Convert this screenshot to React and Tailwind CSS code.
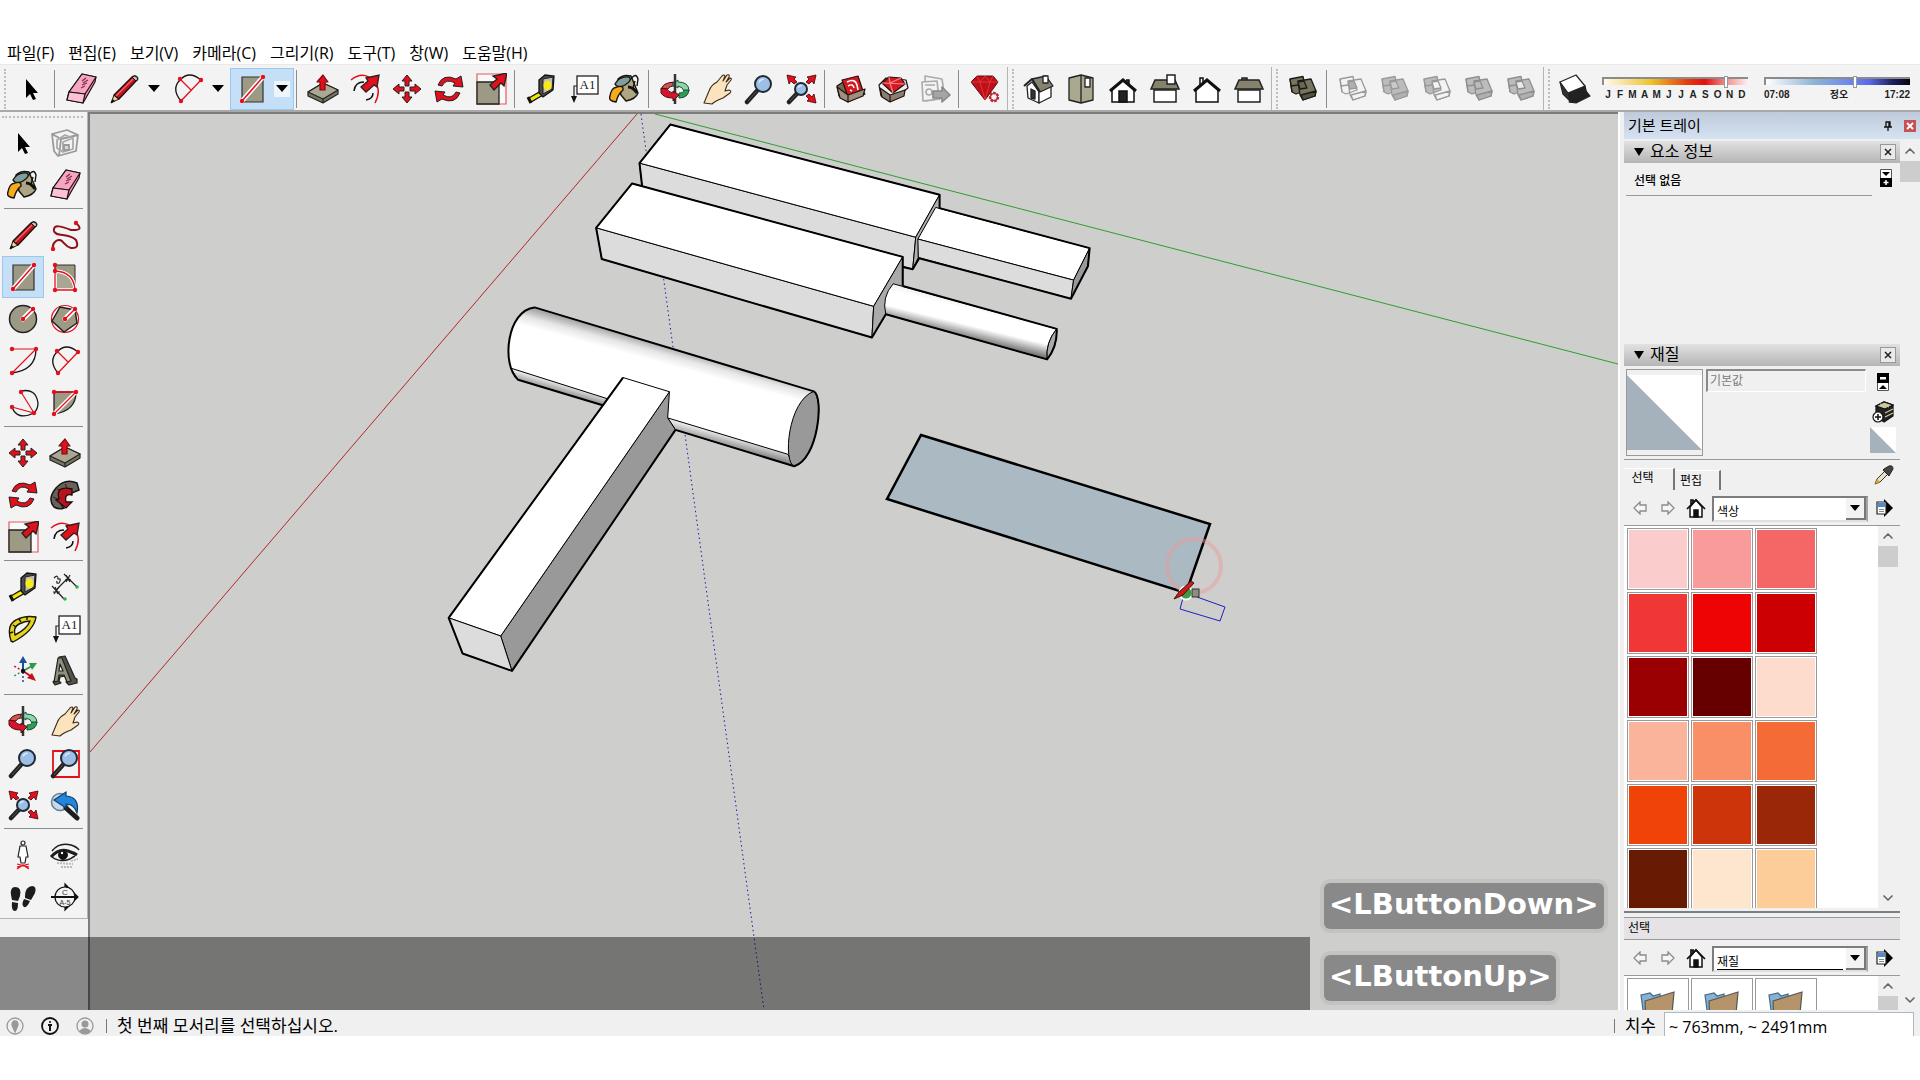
import { useState } from "react";
import clsx from "clsx";
import { ChevronDown, ChevronUp } from "lucide-react";

const menus = ["파일(F)", "편집(E)", "보기(V)", "카메라(C)", "그리기(R)", "도구(T)", "창(W)", "도움말(H)"];

const months = ["J", "F", "M", "A", "M", "J", "J", "A", "S", "O", "N", "D"];

const swatches = [
  "bg-[#fbcccc]", "bg-[#f99b9b]", "bg-[#f56766]",
  "bg-[#f13636]", "bg-[#ee0404]", "bg-[#cc0002]",
  "bg-[#9a0002]", "bg-[#660000]", "bg-[#fddccd]",
  "bg-[#fab49b]", "bg-[#f88f67]", "bg-[#f56b36]",
  "bg-[#f04307]", "bg-[#cd340a]", "bg-[#9a2708]",
  "bg-[#681b03]", "bg-[#fee6ce]", "bg-[#fccd99]",
];

const RED = "#e3101c";
const TAN = "#9c9a84";

function Dots({ points }) {
  return points.map(([x, y]) => (
    <circle key={`${x}-${y}`} cx={x} cy={y} r="2.2" fill={RED} />
  ));
}

function Lens({ x = 19, y = 11, r = 8 }) {
  return (
    <>
      <path d={`M${x - r * 0.8} ${y + r * 0.9}L4 29`} stroke="#222" strokeWidth="4.5" strokeLinecap="round" />
      <path d={`M${x - r * 0.8} ${y + r * 0.9}L5 28`} stroke="#555" strokeWidth="1" />
      <circle cx={x} cy={y} r={r} fill="#9dbfe6" stroke="#1f2a35" strokeWidth="2" />
      <path d={`M${x - r * 0.5} ${y - r * 0.2}a${r * 0.6} ${r * 0.6} 0 0 1 ${r * 0.6} -${r * 0.4}`} stroke="#d8e9fa" strokeWidth="1.5" />
    </>
  );
}

function Solids({ back, front, middle, stroke, side }) {
  return (
    <g stroke={stroke} strokeWidth="1.3" strokeLinejoin="round">
      <path d="M3 6L16 3.500L17 8L20 17L9 21L5 19Z" fill={back} />
      <path d="M3 6L4 13L5 19M4 13L18 11" fill="none" />
      <path d="M11 8L24 6L29 18L28 23L16 27L13 22Z" fill={front} />
      <path d="M14 22L29 18L28 23L16 27Z" fill={side} />
      <path d="M11 9L17 8L20 15L13 16Z" fill={middle} />
    </g>
  );
}

const icons = {
  select: <path d="M11 6V25L15 21L18 27L21 26L18 20H23Z" fill="#000" />,
  eraser: (
    <g stroke="#1a1214" strokeWidth="1.2" strokeLinejoin="round">
      <path d="M17 1L31 4L30 9L18 30L2 27L4 19Z" fill="#f48db0" />
      <path d="M17 1L31 4L20 21L4 19Z" fill="#f8a5bf" />
      <path d="M4 19L20 21L18 30L2 27Z" fill="#fcc2d4" />
      <path d="M21 5L17 8M23 7L18 10M22 10L17 12M20 13L16 15" stroke="#7a2c48" />
    </g>
  ),
  pencil: (
    <g strokeLinejoin="round">
      <path d="M3 30L6 22L11 26Z" fill="#e8cf9b" stroke="#1a1010" strokeWidth="1" />
      <path d="M6 22L24 4Q27 2 29 4T28 8L11 26Z" fill="#c3141c" stroke="#1a1010" strokeWidth="1.3" />
      <path d="M8 23L25 6" stroke="#f0676b" strokeWidth="1.3" />
      <path d="M24 4Q27 2 29 4T28 8Z" fill="#bdbdbd" stroke="#1a1010" />
      <path d="M3 30L4.500 26L7 28Z" fill="#111" />
    </g>
  ),
  arc2: (
    <g fill="none">
      <path d="M9 28Q-1 16 8 7Q17 -3 29 7" stroke="#151515" strokeWidth="1.3" />
      <path d="M9 28L29 7M8 6L19 17" stroke={RED} strokeWidth="1.3" />
      <Dots points={[[8, 6], [29, 7], [9, 28]]} />
    </g>
  ),
  rect: (
    <>
      <path d="M6 4H27V29H6Z" fill={TAN} stroke="#333" strokeWidth="1.2" />
      <path d="M6 28L27 4" stroke="#fff" strokeWidth="4.500" strokeLinecap="round" />
      <path d="M6 28L27 4" stroke={RED} strokeWidth="1.5" />
      <Dots points={[[6, 28], [27, 4]]} />
    </>
  ),
  rotRect: (
    <>
      <path d="M6 4H26V29H6Z" fill={TAN} stroke="#333" strokeWidth="1" />
      <path d="M6 10Q25 11 26 29H6Z" fill="#a9a793" stroke="#fff" strokeWidth="3.500" />
      <path d="M6 4V29H26Q25 11 6 10" fill="none" stroke={RED} strokeWidth="1.3" />
      <Dots points={[[6, 4], [6, 10], [6, 29], [26, 29]]} />
    </>
  ),
  circle: (
    <>
      <circle cx="16" cy="16" r="13.500" fill={TAN} stroke="#222" strokeWidth="1.5" />
      <path d="M16 16L26 6" stroke="#fff" strokeWidth="5" strokeLinecap="round" />
      <path d="M16 16L26 6" stroke={RED} strokeWidth="1.5" />
      <Dots points={[[16, 16], [26, 6]]} />
    </>
  ),
  polygon: (
    <>
      <circle cx="16" cy="16" r="13.500" fill="#fff" stroke={RED} strokeWidth="1.2" />
      <path d="M11 4L26 7L28 20L15 29L3 18Z" fill={TAN} stroke="#222" strokeWidth="1.5" />
      <path d="M16 16L26 6" stroke="#fff" strokeWidth="5" strokeLinecap="round" />
      <path d="M16 16L26 6" stroke={RED} strokeWidth="1.5" />
      <Dots points={[[16, 16], [26, 6]]} />
    </>
  ),
  arc: (
    <g fill="none">
      <path d="M29 4Q29 25 5 28" stroke="#151515" strokeWidth="1.3" />
      <path d="M5 4H29L5 28" stroke={RED} strokeWidth="1.2" />
      <Dots points={[[5, 4], [29, 4], [5, 28]]} />
    </g>
  ),
  arc3: (
    <g fill="none">
      <path d="M14 4Q29 1 31 16Q31 22 27 26Q10 34 5 20" stroke="#151515" strokeWidth="1.3" />
      <path d="M14 5L27 26L5 20" stroke={RED} strokeWidth="1.2" />
      <Dots points={[[14, 5], [27, 26], [5, 20]]} />
    </g>
  ),
  pie: (
    <>
      <path d="M5 5H27Q27 24 5 27Z" fill={TAN} stroke="#222" strokeWidth="1.3" />
      <path d="M5 27L27 5" stroke="#fff" strokeWidth="4" />
      <path d="M27 5H5M5 27L27 5" stroke={RED} strokeWidth="1.3" />
      <Dots points={[[5, 5], [27, 5], [5, 27]]} />
    </>
  ),
  freehand: (
    <g fill="none">
      <path d="M27 4Q36 12 22 11C12 7 4 5 5 12C6 18 20 14 27 21Q31 30 22 29C14 27 14 18 7 22Q3 25 4 30" stroke="#8f1018" strokeWidth="2" />
      <Dots points={[[27, 4], [4, 30]]} />
    </g>
  ),
  pushPull: (
    <g stroke="#222" strokeWidth="1.2" strokeLinejoin="round">
      <path d="M1 19L16 10L31 17V21L16 30L1 23Z" fill="#77755f" />
      <path d="M1 19L16 10L31 17L16 26Z" fill="#aaa892" />
      <path d="M16 26V30" />
      <path d="M16 2L21 9H18V17H13V9H10Z" fill={RED} stroke="#7a0a10" />
    </g>
  ),
  offset: (
    <g fill="none">
      <path d="M2 7Q14 -3 25 8Q33 17 26 30" stroke={RED} strokeWidth="1.5" />
      <path d="M5 18Q6 9 15 9M24 20Q24 26 17 27" stroke="#111" strokeWidth="1.5" />
      <path d="M12 14L19 8L17 5L30 2L28 14L25 12L17 19Z" fill={RED} stroke="#222" strokeWidth="1.3" />
    </g>
  ),
  move: (
    <g fill={RED} stroke="#222" strokeWidth="1" strokeLinejoin="round">
      <path d="M16 2L21 8H18V13H14V8H11Z" />
      <path d="M16 30L21 24H18V19H14V24H11Z" />
      <path d="M2 16L8 11V14H13V18H8V21Z" />
      <path d="M30 16L24 11V14H19V18H24V21Z" />
    </g>
  ),
  rotate: (
    <g fill={RED} stroke="#222" strokeWidth="1" strokeLinejoin="round">
      <path d="M5 12Q10 0 23 6L28 3L30 14L20 13L22 10Q13 5 9 13Z" />
      <path d="M27 20Q22 32 9 26L4 29L2 18L12 19L10 22Q19 27 23 19Z" />
    </g>
  ),
  scale: (
    <>
      <path d="M2 1H31V31H2Z" fill="#fff" fillOpacity=".5" stroke="#e35a62" strokeWidth="1.2" />
      <path d="M2 9H24V31H2Z" fill={TAN} stroke="#222" strokeWidth="1.3" />
      <path d="M15 12L22 6L18 3L32 0L29 13L26 10L19 17Z" fill={RED} stroke="#222" strokeWidth="1.3" />
    </>
  ),
  follow: (
    <>
      <path d="M5 28Q-2 20 7 9Q16 -1 28 4L30 11L23 14Q14 9 11 21Q12 27 15 29Q10 31 5 28Z" fill="#66645a" stroke="#171717" strokeWidth="1.5" />
      <path d="M4 18L11 21M8 10L15 12M16 5L19 11" stroke="#222" />
      <path d="M23 10Q6 6 10 20L7 21L17 29L23 23H17Q15 14 23 16Z" fill="#b3151e" stroke="#2b0507" strokeWidth="1.3" />
    </>
  ),
  tape: (
    <>
      <path d="M4 25L16 18L18 22L6 29Z" fill="#f2e30b" stroke="#111" strokeWidth="1.3" />
      <path d="M3 24L6 30" stroke="#111" strokeWidth="3" />
      <path d="M14 7L20 2L29 3L28 17L18 24L14 20Z" fill="#4b4b4b" stroke="#111" strokeWidth="1.3" />
      <path d="M18 6L28 4L27 16L18 21Z" fill="#bdbdbd" stroke="#222" />
      <ellipse cx="22.500" cy="12.500" rx="4" ry="5" fill="#f7ec1b" />
    </>
  ),
  text: (
    <>
      <path d="M7 23V13H11" fill="none" stroke="#222" strokeWidth="1.2" />
      <path d="M4 23H10L7 30Z" fill="#111" />
      <rect x="10" y="3" width="21" height="18" fill="#fff" stroke="#222" strokeWidth="1.3" />
      <text x="20.500" y="16" textAnchor="middle" fontFamily="Liberation Serif" fontSize="13" fill="#222">A1</text>
    </>
  ),
  paint: (
    <g stroke="#16150f" strokeWidth="1.4" strokeLinejoin="round">
      <path d="M9 6Q14 1 22 3L29 20Q27 26 17 28L12 22Z" fill="#b0a583" />
      <path d="M6 11Q10 3 20 4Q24 7 16 12Q9 16 6 11Z" fill="#7f9f9f" />
      <path d="M22 6Q27 -1 29 6L28 13M26 8L24 15" fill="none" />
      <path d="M5 15Q15 11 14 17Q9 21 7 29Q-1 28 1 23Q2 17 5 15Z" fill="#f4ab1c" />
      <path d="M19 14Q24 14 28 20" fill="none" stroke="#111" strokeWidth="3" />
    </g>
  ),
  orbit: (
    <g strokeWidth="1" strokeLinejoin="round">
      <path d="M15 9Q2 10 3 17L9 16Q10 13 16 13Z" fill="#c55" stroke="#4c0a10" />
      <path d="M19 7L13 11L19 15V13Q24 14 25 18H30Q30 9 19 9Z" fill="#8ed5ae" stroke="#14512e" />
      <path d="M30 17Q29 25 20 25V20Q25 20 25 17Z" fill="#2f9d58" stroke="#14512e" />
      <path d="M16 1V31" stroke="#333" strokeWidth="2.500" />
      <path d="M2 15V20Q5 25 14 25V28L20 22L14 18V20Q9 19 8 16Z" fill="#d5152b" stroke="#4c0a10" />
    </g>
  ),
  pan: (
    <path
      d="M3 30L8 18Q10 12 16 9L21 3Q23 1 24 3L22 8L26 2Q29 1 28 4L25 9L29 5Q31 5 30 7L26 12L24 18L28 17Q31 18 29 20L22 25Q14 28 11 31Z"
      fill="#fbe3bd"
      stroke="#3c2b1c"
      strokeWidth="1.1"
      strokeLinejoin="round"
    />
  ),
  zoom: <Lens x={20} y={11} />,
  zoomWindow: (
    <>
      <path d="M4 4H30V30H4Z" fill="none" stroke={RED} strokeWidth="1.8" />
      <Lens x={20} y={11} />
    </>
  ),
  extents: (
    <>
      <Lens x={16} y={16} r={6} />
      <g fill={RED} stroke="#3a0508" strokeWidth=".8">
        <path d="M2 2L11 4L9 6L12 9L9 11L6 8L4 11Z" />
        <path d="M31 2L22 4L24 6L21 9L24 11L27 8L29 11Z" />
        <path d="M31 30L22 28L24 26L21 23L24 21L27 24L29 21Z" />
      </g>
    </>
  ),
  previous: (
    <>
      <circle cx="11" cy="13" r="8.500" fill="#c6d9ea" stroke="#6b7f90" strokeWidth="1.5" />
      <path d="M17 19L28 29" stroke="#1d1d1d" strokeWidth="5" strokeLinecap="round" />
      <path d="M5 11L17 3V7Q31 8 28 24Q25 15 17 15V19Z" fill="#2386dc" stroke="#123c66" strokeWidth="1.2" />
    </>
  ),
  warehouse: (
    <g stroke="#22120d" strokeWidth="1.2" strokeLinejoin="round">
      <path d="M2 13L8 9L26 16L30 21L13 29L4 23Z" fill="#75685a" />
      <path d="M7 7L23 3L28 18L13 24Z" fill="#d31a22" />
      <path d="M2 14L13 22V29L5 25ZM13 22L30 16L28 23L13 29Z" fill="#9d9080" />
      <path d="M12 9Q20 5 22 12L23 17M13 13Q18 10 19 15M15 17L17 18" stroke="#fff" strokeWidth="1.5" fill="none" />
    </g>
  ),
  extension: (
    <g stroke="#22120d" strokeWidth="1.2" strokeLinejoin="round">
      <path d="M2 12L9 5L29 7L31 15L14 28L4 23Z" fill="#eee" />
      <path d="M5 10L12 4L24 5L28 11L16 20Z" fill="#d31a22" />
      <path d="M5 10L28 11M12 4L13 10L24 5M13 10L16 20" stroke="#ff8186" fill="none" />
      <path d="M3 15L13 22V29L5 24ZM13 22L28 17L27 23L13 29Z" fill="#8a7f72" />
    </g>
  ),
  layout: (
    <g stroke="#aaa" strokeWidth="1.6" fill="#f3f3f3" strokeLinejoin="round">
      <path d="M6 3L23 6L26 25L7 28Z" />
      <path d="M3 9L18 8L20 26L4 28Z" />
      <path d="M6 12H16M9 19H14" />
      <circle cx="10" cy="19" r="3" />
      <path d="M14 18H23V14L31 22L23 29V25H14Z" fill="#a5a5a5" stroke="#888" />
    </g>
  ),
  ruby: (
    <g strokeLinejoin="round">
      <path d="M2 9L8 3H24L29 9L16 27Z" fill="#bd1019" stroke="#5e0a10" />
      <path d="M2 9H29M8 3L11 9L16 3L21 9L24 3M11 9L16 27L21 9" stroke="#e0343b" fill="none" />
      <circle cx="25" cy="24" r="4" fill="#f3f3f3" stroke="#b72a32" strokeWidth="2.500" strokeDasharray="2.500 1" />
      <circle cx="25" cy="24" r="3.500" fill="none" stroke="#b72a32" strokeWidth="1.200" />
    </g>
  ),
  iso: (
    <g stroke="#222" strokeWidth="1.3" strokeLinejoin="round">
      <path d="M4 13L9 9L16 19V30L5 25Z" fill="#fff" />
      <path d="M16 19L28 13V24L16 30Z" fill="#fff" />
      <path d="M9 6L23 3L30 13L17 19Z" fill="#85836f" />
      <path d="M1 13L9 6L17 19" fill="none" strokeWidth="2" />
      <path d="M20 3H25V10H20Z" fill="#fff" />
      <path d="M8 16L12 18V26L8 25Z" fill="#333" />
    </g>
  ),
  top: (
    <g stroke="#222" strokeWidth="1.3" strokeLinejoin="round">
      <path d="M4 5L16 2L28 5V27L16 30L4 27Z" fill="#aaa88f" />
      <path d="M16 2V30" />
      <path d="M20 5H25V14H20Z" fill="#fff" />
    </g>
  ),
  front: (
    <g stroke="#111" strokeWidth="1.5">
      <path d="M5 17V29H27V17L16 7Z" fill="#fff" />
      <path d="M19 7H22V12" fill="#333" />
      <path d="M3 18L16 7L29 18" fill="none" strokeWidth="3" />
      <path d="M12 18H20V29H12Z" fill="#222" />
    </g>
  ),
  right: (
    <g stroke="#222" strokeWidth="1.5">
      <path d="M5 17H27V29H5Z" fill="#fff" />
      <path d="M6 7H26L30 16H2Z" fill="#85836f" />
      <path d="M18 2H26V11H18Z" fill="#fff" />
    </g>
  ),
  back: (
    <g stroke="#111" strokeWidth="1.5">
      <path d="M9 5H12V12H9Z" fill="#fff" />
      <path d="M5 17V29H27V17L16 7Z" fill="#fff" />
      <path d="M3 18L16 7L29 18" fill="none" strokeWidth="3" />
    </g>
  ),
  left: (
    <g stroke="#222" strokeWidth="1.5">
      <path d="M9 5H14V8H9Z" fill="#85836f" />
      <path d="M5 17H27V29H5Z" fill="#fff" />
      <path d="M6 7H26L30 16H2Z" fill="#85836f" />
    </g>
  ),
  shell: <Solids back="#77755f" front="#77755f" middle="#6a6854" side="#55533f" stroke="#1b1b14" />,
  intersect: <Solids back="none" front="none" middle="#b0b0b0" side="none" stroke="#9a9a9a" />,
  union: <Solids back="#bcbcbc" front="#bcbcbc" middle="#cacaca" side="#b0b0b0" stroke="#9a9a9a" />,
  subtract: <Solids back="#bcbcbc" front="none" middle="#f3f3f3" side="none" stroke="#9a9a9a" />,
  trim: <Solids back="#bcbcbc" front="#bcbcbc" middle="#bcbcbc" side="#b0b0b0" stroke="#8f8f8f" />,
  split: <Solids back="#bcbcbc" front="#bcbcbc" middle="#ececec" side="#b0b0b0" stroke="#8f8f8f" />,
  shadow: (
    <g stroke="#222" strokeWidth="1.2" strokeLinejoin="round">
      <path d="M10 29L17 30L31 23L27 18Z" fill="#222" />
      <path d="M1 9L9 19L12 29L4 21Z" fill="#333" />
      <path d="M9 19L26 13L28 22L12 29Z" fill="#222" />
      <path d="M1 9L17 2L26 13L9 20Z" fill="#fff" />
    </g>
  ),
  component: (
    <g stroke="#999" fill="none" strokeWidth="1.8" strokeLinejoin="round">
      <path d="M3 7L18 3L29 8L27 24L9 29L5 24ZM3 7L12 12L29 8M12 12L10 29" />
      <path d="M8 13L16 8L24 11V22L14 25L8 21ZM14 25V15L24 11" stroke="#aaa" />
      <path d="M15 18H20V23H15Z" fill="#d8d8d8" />
    </g>
  ),
  dimension: (
    <g stroke="#222" strokeWidth="1.2" fill="none">
      <path d="M7 19L19 7M3 15L15 28M15 3L28 16" />
      <path d="M4 21H11M6 16L9 23M16 9H22M17 4L21 11M21 4L17 11M10 16L5 23" />
      <path d="M5 7Q9 3 9 8Q13 7 10 12Q7 13 8 10" />
      <circle cx="16" cy="28" r="1.800" fill="#32b34a" stroke="none" />
      <circle cx="28" cy="16" r="1.800" fill="#32b34a" stroke="none" />
    </g>
  ),
  protractor: (
    <g stroke="#17150a" strokeWidth="1.4" strokeLinejoin="round">
      <path d="M4 28Q-1 12 9 7Q18 2 29 4Q27 18 6 29Z" fill="#e7d41c" />
      <path d="M8 22Q6 14 12 11Q18 8 23 8Q20 16 8 22Z" fill="#f3f3f3" />
      <path d="M3 20L6 19M6 12L9 14M12 6L14 9M20 4L20 7" />
    </g>
  ),
  axes: (
    <g strokeWidth="1.500">
      <path d="M16 16V6" stroke="#1d4f9c" strokeWidth="2" />
      <path d="M12 8L16 1L20 8Z" fill="#1d4f9c" />
      <path d="M16 16L25 11" stroke="#2f9a43" strokeWidth="2" />
      <path d="M22 8L30 8L25 15Z" fill="#2f9a43" />
      <path d="M16 16L25 22" stroke="#c3121c" strokeWidth="2" />
      <path d="M20 23L25 18L29 26Z" fill="#c3121c" />
      <path d="M16 16L7 11" stroke="#c3121c" strokeDasharray="2 2" />
      <path d="M16 16L7 21" stroke="#2f9a43" strokeDasharray="2 2" />
      <path d="M16 17V28" stroke="#1d4f9c" strokeDasharray="2 2" />
      <circle cx="16" cy="16" r="2.200" fill="#111" />
    </g>
  ),
  text3d: (
    <g stroke="#20201b" strokeWidth="1.2" strokeLinejoin="round">
      <path d="M10 2L16 1L26 23L28 24V28L20 30L17 27L18 25L16 21L11 22L10 26L12 28L6 30L4 27L6 25Z" fill="#55534a" />
      <path d="M9 3L13 3L22 26L18 27L15 20L10 20L9 26L5 27Z" fill="#908e7c" />
      <path d="M11 9L14 16H10Z" fill="#f3f3f3" />
    </g>
  ),
  camera: (
    <g fill="none" stroke="#222" strokeWidth="1.2">
      <circle cx="16" cy="4" r="2" fill="#fff" />
      <path d="M13 7H19L21 18H19L18 24H14L13 18H11Z" fill="#fff" />
      <path d="M10 30L16 26L22 30M10 25L22 28M22 25L10 28" stroke={RED} strokeWidth="1.200" />
    </g>
  ),
  look: (
    <g fill="none" stroke="#1d1d1d">
      <path d="M3 12Q10 3 22 6Q28 8 30 11" strokeWidth="1.500" />
      <path d="M2 18Q10 9 19 12Q25 14 28 16" strokeWidth="3" />
      <path d="M3 18Q11 24 21 20Q24 18 26 17" strokeWidth="1.500" />
      <circle cx="14" cy="16" r="4.500" fill="#111" />
      <circle cx="13" cy="14" r="1.200" fill="#fff" stroke="none" />
      <path d="M8 24L24 25M12 28L24 28M22 22L29 20" stroke="#bbb" strokeWidth="2" strokeDasharray="2 1" />
    </g>
  ),
  walk: (
    <g fill="#1c1c1c">
      <path d="M4 14Q3 6 8 6Q15 6 13 15L11 20L5 19ZM5 21L11 22Q11 30 8 30Q4 30 5 21Z" />
      <path d="M18 15Q18 6 25 5Q30 5 28 12L24 19L18 17ZM17 18L23 20Q20 27 17 26Q14 24 17 18Z" />
    </g>
  ),
  section: (
    <g stroke="#111" strokeWidth="1.200">
      <path d="M16 3L29 16L16 29Z" fill="#111" />
      <circle cx="16" cy="16" r="10" fill="#f3f3f3" />
      <path d="M2 16H29" strokeWidth="2" />
      <text x="16" y="14" textAnchor="middle" fontSize="8" fontFamily="Liberation Sans" fill="#333" stroke="none">C</text>
      <text x="16" y="24" textAnchor="middle" fontSize="7" fontFamily="Liberation Sans" fill="#333" stroke="none">A-5</text>
    </g>
  ),
};

const toolbarGroups = [
  [
    ["eraser"],
    ["pencil", true],
    ["arc2", true],
    ["rect", true],
  ],
  [["pushPull"], ["offset"], ["move"], ["rotate"], ["scale"]],
  [["tape"], ["text"], ["paint"]],
  [["orbit"], ["pan"], ["zoom"], ["extents"]],
  [["warehouse"], ["extension"], ["layout"]],
  [["ruby"]],
];

const views = ["iso", "top", "front", "right", "back", "left"];
const solids = ["intersect", "union", "subtract", "trim", "split"];

const dockGroups = [
  ["select", "component", "paint", "eraser"],
  ["pencil", "freehand", "rect", "rotRect", "circle", "polygon", "arc", "arc2", "arc3", "pie"],
  ["move", "pushPull", "rotate", "follow", "scale", "offset"],
  ["tape", "dimension", "protractor", "text", "axes", "text3d"],
  ["orbit", "pan", "zoom", "zoomWindow", "extents", "previous"],
  ["camera", "look", "walk", "section"],
];

function Icon({ name }) {
  return (
    <svg viewBox="0 0 32 32" className="size-8 shrink-0" fill="none" aria-hidden="true">
      {icons[name]}
    </svg>
  );
}

function Caret() {
  return (
    <svg viewBox="0 0 12 7" className="h-[7px] w-3" aria-hidden="true">
      <path d="M0 0H12L6 7Z" fill="#000" />
    </svg>
  );
}

function ToolButton({ name, split, active, onClick }) {
  return (
    <button
      type="button"
      aria-label={name}
      onClick={onClick}
      className={clsx(
        "flex h-[42px] shrink-0 items-center border",
        split ? "w-16 gap-1.5 pl-[5px]" : "w-[42px] justify-center",
        active ? "border-[#99c9f2] bg-[#c5dff7]" : "border-transparent"
      )}
    >
      <Icon name={name} />
      {split && (
        <span className={clsx("flex h-4 w-4 items-center justify-center", active && "bg-[#eef4fb]")}>
          <Caret />
        </span>
      )}
    </button>
  );
}

function Divider() {
  return <div className="mr-[5px] ml-0.5 h-[38px] w-px shrink-0 bg-[#8c8c8c]" />;
}

function Grip() {
  return (
    <div className="mx-1 h-10 w-0 shrink-0 border-l-2 border-dotted border-[#bdbdbd]" />
  );
}

function ToolbarEnd() {
  return (
    <>
      <div className="ml-px w-px shrink-0 self-stretch bg-[#b4b4b4]" />
      <Grip />
    </>
  );
}

function ShadowSlider({ label, track, value, children }) {
  return (
    <div className="w-[146px] shrink-0">
      <input
        aria-label={label}
        type="range"
        defaultValue={value}
        className={clsx(
          "block h-2 w-full appearance-none border-t-2 border-l-2 border-[#8b8b8b]",
          "[&::-webkit-slider-thumb]:h-3 [&::-webkit-slider-thumb]:w-1 [&::-webkit-slider-thumb]:appearance-none [&::-webkit-slider-thumb]:border [&::-webkit-slider-thumb]:border-[#999] [&::-webkit-slider-thumb]:bg-white",
          track
        )}
      />
      <div className="mt-0.5 flex justify-between font-['Liberation_Sans','Noto_Sans_CJK_KR',sans-serif] text-[10px] leading-4 font-semibold text-[#222]">
        {children}
      </div>
    </div>
  );
}

function Toolbar({ tool, setTool }) {
  return (
    <div className="flex h-12 shrink-0 items-center border-t border-b-2 border-t-[#e9e9e9] border-b-[#a9a9a9] bg-[#f3f3f3] pt-0.5">
      <Grip />
      <ToolButton name="select" onClick={() => setTool("select")} />
      {toolbarGroups.map((group) => (
        <div key={group[0][0]} className="flex shrink-0 items-center">
          <Divider />
          {group.map(([name, split]) => (
            <ToolButton key={name} name={name} split={split} active={tool === name} onClick={() => setTool(name)} />
          ))}
        </div>
      ))}
      <ToolbarEnd />
      {views.map((name) => (
        <ToolButton key={name} name={name} />
      ))}
      <ToolbarEnd />
      <ToolButton name="shell" />
      <Divider />
      {solids.map((name) => (
        <ToolButton key={name} name={name} />
      ))}
      <ToolbarEnd />
      <ToolButton name="shadow" />
      <div className="ml-1.5 flex gap-4 pt-0.5">
        <ShadowSlider
          label="날짜"
          value={86}
          track="bg-[linear-gradient(90deg,#fffaf0,#eec22b_33%,#e33a10_58%,#e3100f_70%,#ee8a8a_84%,#fff0f2)]"
        >
          {months.map((month, index) => (
            <span key={index} className="w-3 text-center">{month}</span>
          ))}
        </ShadowSlider>
        <ShadowSlider
          label="시간"
          value={62}
          track="bg-[linear-gradient(90deg,#fff,#8fb4d6_33%,#6a83ee_60%,#5a68e6_72%,#1c1f5c_88%,#05050c)]"
        >
          <span>07:08</span>
          <span className="pl-1">정오</span>
          <span>17:22</span>
        </ShadowSlider>
      </div>
    </div>
  );
}

function Dock({ tool, setTool }) {
  return (
    <aside className="w-[90px] shrink-0 border-r-2 border-[#7c7c7c] bg-[#f0f0f0]">
      <div className="border-r border-b border-[#b4b4b4] bg-[#f3f3f3] pl-0.5">
        <div className="h-2.5 pt-1">
          <div className="mr-1 border-t-2 border-dotted border-[#bdbdbd]" />
        </div>
        {dockGroups.map((group, index) => (
          <div key={group[0]}>
            {index > 0 && <div className="mt-0.5 mr-1 mb-[5px] ml-0.5 h-px bg-[#8c8c8c]" />}
            <div className="grid grid-cols-[42px_42px]">
              {group.map((name) => (
                <ToolButton key={name} name={name} active={tool === name} onClick={() => setTool(name)} />
              ))}
            </div>
          </div>
        ))}
      </div>
    </aside>
  );
}

function Scene() {
  return (
    <svg viewBox="90 114 1528 896" preserveAspectRatio="xMinYMin slice" className="absolute inset-0 size-full" fill="none" aria-label="모델">
      <defs>
        <linearGradient id="head" gradientUnits="userSpaceOnUse" x1="540" y1="655" x2="480" y2="840">
          <stop offset="0" stopColor="#aaa" />
          <stop offset=".12" stopColor="#e6e6e6" />
          <stop offset=".25" stopColor="#fff" />
        </linearGradient>
        <linearGradient id="under" gradientUnits="userSpaceOnUse" x1="270" y1="750" x2="262" y2="774">
          <stop offset="0" stopColor="#e8e8e8" />
          <stop offset="1" stopColor="#909090" />
        </linearGradient>
        <linearGradient id="under-right" gradientUnits="userSpaceOnUse" x1="670" y1="898" x2="662" y2="924">
          <stop offset="0" stopColor="#e8e8e8" />
          <stop offset="1" stopColor="#909090" />
        </linearGradient>
        <linearGradient id="grip" gradientUnits="userSpaceOnUse" x1="1235" y1="540" x2="1210" y2="626">
          <stop offset="0" stopColor="#f4f4f4" />
          <stop offset=".15" stopColor="#fff" />
          <stop offset=".6" stopColor="#fff" />
          <stop offset="1" stopColor="#777" />
        </linearGradient>
      </defs>

      <path d="M637 114L90 752" stroke="#b3282c" />
      <path d="M655 114L1618 364" stroke="#2f9e2f" />
      <path d="M641 114L764 1010" stroke="#1c1ca8" strokeDasharray="1.500 3" />

      <g
        transform="translate(440 110) scale(.43367 .36352)"
        stroke="#000"
        strokeLinejoin="round"
        className="[&_path]:[vector-effect:non-scaling-stroke]"
      >
        {/* chisel blank, back */}
        <path d="M460 146L1097 350L1090 438L466 209Z" fill="#dcdcdc" />
        <path d="M531 40L1152 233L1097 350L460 146Z" fill="#fff" />
        <path d="M1152 233V268L1103 355V406L1090 438L1097 350Z" fill="#b0b0b0" />
        <path d="M1143 268L1498 380L1461 468L1102 355Z" fill="#fff" />
        <path d="M1102 355L1461 468L1455 519L1103 406Z" fill="#dcdcdc" />
        <path d="M1498 380L1494 430L1455 519L1461 468Z" fill="#999" />
        <path d="M466 209L460 146L531 40L1152 233V270L1498 380L1494 430L1455 519L1105 408L1090 438L1067 432" strokeWidth="2" />

        {/* chisel blank, front */}
        <path d="M360 324L1000 540L996 626L373 410Z" fill="#dcdcdc" />
        <path d="M443 202L1067 404L1000 540L360 324Z" fill="#fff" />
        <path d="M1067 404V482L1027 565L996 626L1000 540Z" fill="#aaa" />
        <path d="M1045 478L1422 602Q1396 640 1400 686L1028 562Q1018 515 1045 478Z" fill="url(#grip)" />
        <path d="M1422 602Q1424 650 1400 686Q1396 640 1422 602Z" fill="#aaa" />
        <path d="M1067 482V404L443 202L360 324L373 410L996 626L1028 562L1400 686Q1424 650 1422 602L1067 484" strokeWidth="2" />

        {/* mallet head */}
        <path d="M218 543L862 774Q804 830 802 950L817 980L180 742Q157 720 157 660Q165 560 218 543Z" fill="url(#head)" stroke="none" />
        <path d="M163 710L388 795L375 812L180 742Z" fill="url(#under)" />
        <path d="M525 847L802 947L817 980L543 880Z" fill="url(#under-right)" />
        <path d="M862 774C886 790 872 960 817 980C790 970 802 800 862 774Z" fill="#999" />
        <path d="M375 812L180 742C140 700 155 550 218 543L862 774C886 790 872 960 817 980L543 880" strokeWidth="2" />

        {/* mallet handle */}
        <path d="M529 775L525 847L543 880L166 1543L140 1447Z" fill="#999" />
        <path d="M422 736L529 775L140 1447L20 1397Z" fill="#fff" />
        <path d="M20 1397L140 1447L166 1543L52 1495Z" fill="#dcdcdc" />
        <path d="M422 736L20 1397L52 1495L166 1543L543 880" strokeWidth="2" />
      </g>

      <path d="M921 435L1210 524L1186 593L887 499Z" fill="#abb9c3" stroke="#000" strokeWidth="2.500" />
      <circle cx="1194" cy="566" r="27" stroke="#ee9a98" strokeOpacity=".45" strokeWidth="4" />
      <path d="M1183 598L1180 609L1220 621L1225 607L1197 597" stroke="#2020c0" />
      <circle cx="1186" cy="593" r="6.500" fill="#3f9a48" stroke="#fff" strokeWidth="2" />
      <rect x="1192" y="589" width="7" height="8" fill="#8f8d7c" stroke="#333" />
      <path d="M1174 599L1179 592L1191 581L1194 583L1183 595Z" fill="#cf1a1a" stroke="#411" />
    </svg>
  );
}

function KeyBadge({ children }) {
  return (
    <kbd className="flex h-[46px] items-center rounded-md bg-[#898989] px-[5px] pb-1 font-['DejaVu_Sans',sans-serif] text-[29px] leading-none font-bold text-white ring-4 ring-black/5">
      {children}
    </kbd>
  );
}

function PanelHeader({ title }) {
  return (
    <div className="flex h-[22px] shrink-0 items-center bg-linear-to-b from-[#e2e2e2] to-[#b5b5b5] pr-1 pl-2.5">
      <svg viewBox="0 0 10 8" className="h-2 w-2.5" aria-hidden="true">
        <path d="M0 0H10L5 8Z" fill="#000" />
      </svg>
      <h2 className="ml-1.5 flex-1 pb-0.5 text-base leading-5">{title}</h2>
      <button type="button" aria-label="닫기" className="flex size-4 items-center justify-center border border-[#999] bg-[#e9e9e9]">
        <svg viewBox="0 0 8 8" className="size-2" stroke="#222" strokeWidth="1.500" aria-hidden="true">
          <path d="M1 1L7 7M7 1L1 7" />
        </svg>
      </button>
    </div>
  );
}

function NavArrow({ flip }) {
  return (
    <button type="button" aria-label={flip ? "앞으로" : "뒤로"} className="flex w-7 justify-center">
      <svg viewBox="0 0 14 14" className={clsx("size-3.5", flip && "-scale-x-100")} fill="#f6f6f6" stroke="#8a8a8a" strokeWidth="1.300" aria-hidden="true">
        <path d="M1 7L7 1V4H13V10H7V13Z" />
      </svg>
    </button>
  );
}

function MaterialNav({ option, underline }) {
  return (
    <div className="flex h-9 shrink-0 items-center border-b border-[#999] pl-0.5">
      <NavArrow />
      <NavArrow flip />
      <button type="button" aria-label="홈" className="ml-1 flex w-5 justify-center">
        <svg viewBox="0 0 20 20" className="size-5" stroke="#111" strokeWidth="1.500" fill="#fff" aria-hidden="true">
          <path d="M4 9V19H16V9L10 2Z" />
          <path d="M5 7V2H7V5M1 11L10 2L19 11" fill="none" strokeWidth="1.700" />
          <path d="M8 12H12V19H8Z" fill="#111" />
        </svg>
      </button>
      <div className="relative mt-0.5 ml-1.5 h-[26px] w-[156px] border-2 border-[#7d7d7d] border-r-[#a5a5a5] border-b-[#e0e0e0] bg-white">
        <select aria-label="라이브러리" className="h-full w-full appearance-none bg-transparent pl-[3px] text-xs leading-4">
          <option>{option}</option>
        </select>
        {underline && <div className="pointer-events-none absolute bottom-0 left-[3px] h-px w-[126px] bg-black" />}
        <div className="pointer-events-none absolute top-0 right-0 flex h-full w-5 items-center justify-center border-r-2 border-b-2 border-[#777] bg-[#f3f3f3]">
          <svg viewBox="0 0 10 6" className="h-1.5 w-2.5" aria-hidden="true">
            <path d="M0 0H10L5 6Z" fill="#000" />
          </svg>
        </div>
      </div>
      <button type="button" aria-label="세부 정보" className="ml-2">
        <svg viewBox="0 0 18 18" className="size-[18px]" aria-hidden="true">
          <path d="M8 0L17 9L8 18Z" fill="#000" />
          <path d="M1 3H10V15H1Z" fill="#fff" stroke="#222" strokeWidth="1.200" />
          <path d="M2 4H9V8H2Z" fill="#4f8cd0" />
          <path d="M3 10.500H8M3 12.500H8" stroke="#888" />
        </svg>
      </button>
    </div>
  );
}

function Scrollbar({ down }) {
  return (
    <div className="flex w-5 shrink-0 flex-col items-center bg-[#f0f0f0]">
      <ChevronUp size={16} strokeWidth={2.5} className="my-0.5 shrink-0 text-[#666]" />
      <div className="h-[21px] w-full shrink-0 bg-[#cdcdcd]" />
      {down && <ChevronDown size={16} strokeWidth={2.5} className="mt-auto mb-0.5 shrink-0 text-[#666]" />}
    </div>
  );
}

function FolderTile() {
  return (
    <div className="h-[62px] w-[62px] border border-[#999] bg-white px-3 pt-3">
      <svg viewBox="0 0 36 36" className="size-9" strokeWidth="1.200" aria-hidden="true">
        <path d="M1 4L10 2L13 5L20 3V34H5Z" fill="#86b3d3" stroke="#44667e" />
        <path d="M5 10L34 1L31 34H6Z" fill="#b6946b" stroke="#555" />
      </svg>
    </div>
  );
}

function Tray() {
  return (
    <aside className="flex w-[302px] shrink-0 flex-col border-l-2 border-white bg-[#f0f0f0] pl-1">
      <div className="flex h-[27px] shrink-0 items-center bg-linear-to-b from-[#bfcbdb] to-[#d5e2f2] pr-1 pl-1">
        <h1 className="flex-1 pb-0.5 text-[15px] leading-5">기본 트레이</h1>
        <button type="button" aria-label="고정" className="mr-3">
          <svg viewBox="0 0 8 10" className="h-2.5 w-2" stroke="#111" fill="none" strokeWidth="1.300" aria-hidden="true">
            <path d="M2 6V1H6V6M0 6H8M4 6V10M5 1V6" />
          </svg>
        </button>
        <button type="button" aria-label="트레이 닫기" className="flex size-3 items-center justify-center bg-[#c75050]">
          <svg viewBox="0 0 8 8" className="size-2" stroke="#fff" strokeWidth="1.800" aria-hidden="true">
            <path d="M1 1L7 7M7 1L1 7" />
          </svg>
        </button>
      </div>

      <div className="flex min-h-0 flex-1 pt-0.5">
        <div className="flex min-w-0 flex-1 flex-col">
          <section className="h-[203px] shrink-0">
            <PanelHeader title="요소 정보" />
            <div className="flex h-8 justify-between pt-1.5 pr-2 pl-2.5">
              <p className="pt-1 text-xs leading-4 font-medium">선택 없음</p>
              <svg viewBox="0 0 12 18" className="h-[18px] w-3" aria-hidden="true">
                <path d="M.5 .5H11.500V17.500H.5Z" fill="#fff" stroke="#555" />
                <path d="M2 3H10L6 7Z" fill="#000" />
                <path d="M0 9H12V18H0Z" fill="#000" />
                <path d="M6 11V16M3.500 13.500H8.500" stroke="#fff" strokeWidth="1.500" />
              </svg>
            </div>
            <div className="mr-7 ml-0.5 h-px bg-[#999]" />
          </section>

          <PanelHeader title="재질" />
          <div className="flex h-[94px] shrink-0 border-b border-[#999] pt-[3px] pr-0.5 pl-0.5">
            <div className="h-[87px] w-[77px] border border-[#999] bg-[#f0f0f0] pt-[5px]">
              <svg viewBox="0 0 75 75" className="size-[75px]" aria-hidden="true">
                <path d="M0 0H75V75H0Z" fill="#fff" />
                <path d="M0 0L75 75H0Z" fill="#a5b2bb" />
              </svg>
            </div>
            <input
              aria-label="재질 이름"
              disabled
              defaultValue="기본값"
              className="ml-[3px] h-[23px] w-40 border-t-2 border-r border-b border-l-2 border-t-[#8a8a8a] border-r-white border-b-white border-l-[#8a8a8a] bg-[#f0f0f0] px-0.5 pb-0.5 text-xs text-[#7c7c7c]"
            />
            <div className="flex flex-1 flex-col items-center pt-1 pl-0.5">
              <svg viewBox="0 0 12 18" className="h-[18px] w-3" aria-hidden="true">
                <path d="M.5 .5H11.500V17.500H.5Z" fill="#fff" stroke="#555" />
                <path d="M0 0H12V10H0Z" fill="#000" />
                <path d="M3 4H9V6.500H3Z" fill="#fff" />
                <path d="M6 12L10 16H2Z" fill="#000" />
              </svg>
              <button type="button" aria-label="재질 만들기" className="mt-2.5">
                <svg viewBox="0 0 22 22" className="size-[22px]" stroke="#111" strokeWidth="1.200" aria-hidden="true">
                  <path d="M4 5L12 1L21 4V15L12 21L4 15Z" fill="#222" />
                  <path d="M4 5L12 1L21 4L13 8Z" fill="#cfc7a0" />
                  <path d="M8 3L17 6M13 12L21 8M13 16L21 12" stroke="#cfc7a0" />
                  <circle cx="6" cy="16" r="5" fill="#fff" />
                  <path d="M6 13V19M3 16H9" strokeWidth="1.500" />
                </svg>
              </button>
              <svg viewBox="0 0 26 26" className="mt-1 size-[26px] shrink-0" aria-hidden="true">
                <path d="M0 0H26V26H0Z" fill="#fff" />
                <path d="M0 0L26 26H0Z" fill="#a5b2bb" />
              </svg>
            </div>
          </div>

          <div className="flex h-[30px] shrink-0 items-end text-xs leading-4">
            <button type="button" className="h-[22px] w-[51px] border-t border-r-2 border-t-white border-r-[#777] pr-3 pb-1">선택</button>
            <button type="button" className="h-5 w-[46px] border-t border-r-2 border-t-white border-r-[#777] pr-3">편집</button>
            <button type="button" aria-label="샘플 페인트" className="ml-auto flex w-8 justify-center self-center">
              <svg viewBox="0 0 20 20" className="size-5" strokeLinejoin="round" aria-hidden="true">
                <path d="M1 19L3 14L11 6L14 9L6 17Z" fill="#e8e0c8" stroke="#333" />
                <path d="M1 19L3 14L6 17Z" fill="#d9a52c" />
                <path d="M10 4L15 1Q19 0 19 4L16 9L15 11L9 5Z" fill="#444" stroke="#222" />
              </svg>
            </button>
          </div>
          <MaterialNav option="색상" />

          <div className="mr-0.5 flex min-h-0 flex-1 overflow-hidden bg-white">
            <div className="grid flex-1 grid-cols-[62px_62px_62px] content-start gap-0.5 pt-0.5 pl-[3px]">
              {swatches.map((color) => (
                <button key={color} type="button" aria-label="색상" className="h-[62px] border border-[#999] bg-white p-px">
                  <span className={clsx("block size-full", color)} />
                </button>
              ))}
            </div>
            <Scrollbar down />
          </div>

          <div className="mt-[3px] h-0.5 shrink-0 bg-[#7d8080]" />
          <div className="mt-1 h-[23px] shrink-0 border-y border-[#999] bg-[#e5e3e5] pl-1 text-xs leading-5">선택</div>
          <MaterialNav option="재질" underline />
          <div className="mr-0.5 flex h-[34px] shrink-0 overflow-hidden bg-white">
            <div className="grid flex-1 grid-cols-[62px_62px_62px] content-start gap-0.5 pt-0.5 pl-[3px]">
              <FolderTile />
              <FolderTile />
              <FolderTile />
            </div>
            <Scrollbar />
          </div>
        </div>
        <Scrollbar down />
      </div>
    </aside>
  );
}

function StatusBar() {
  return (
    <footer className="flex h-[26px] shrink-0 items-center overflow-hidden bg-[#f0f0f0] text-base leading-6">
      <div className="flex gap-[17px] pt-1.5 pl-1.5">
        <svg viewBox="0 0 18 18" className="size-[18px]" fill="none" stroke="#999" strokeWidth="1.300" aria-hidden="true">
          <circle cx="9" cy="9" r="8" />
          <path d="M9 15L6 8Q6 4 9 4T12 8Z" fill="#999" />
        </svg>
        <svg viewBox="0 0 18 18" className="size-[18px]" fill="none" stroke="#111" strokeWidth="1.800" aria-hidden="true">
          <circle cx="9" cy="9" r="8" />
          <circle cx="9" cy="5" r="1" fill="#111" stroke="none" />
          <path d="M9 7V14M7 8H11" strokeWidth="2" />
        </svg>
        <svg viewBox="0 0 18 18" className="size-[18px]" fill="none" stroke="#999" strokeWidth="1.300" aria-hidden="true">
          <circle cx="9" cy="9" r="8" />
          <circle cx="9" cy="7" r="3.500" fill="#999" stroke="none" />
          <path d="M3 14Q9 8 15 14Q9 19 3 14Z" fill="#999" stroke="none" />
        </svg>
      </div>
      <div className="mt-1.5 ml-3 h-3.5 w-px bg-[#777]" />
      <p className="ml-2.5 flex-1 pt-1.5 text-[17px]">첫 번째 모서리를 선택하십시오.</p>
      <div className="mt-1.5 h-3.5 w-px bg-[#777]" />
      <label htmlFor="measure" className="ml-2.5 pt-1.5 text-[17px]">치수</label>
      <input
        id="measure"
        defaultValue="~ 763mm, ~ 2491mm"
        className="mt-0.5 mr-1.5 ml-2 h-[30px] w-[250px] self-start border border-[#abb8c6] bg-white px-1 text-base"
      />
    </footer>
  );
}

export default function App() {
  const [tool, setTool] = useState("rect");

  return (
    <div className="flex h-screen flex-col bg-white py-11 font-['Open_Sans','Noto_Sans_CJK_KR',sans-serif] text-black">
      <nav className="flex h-5 shrink-0 items-center gap-3.5 pb-0.5 pl-[7px] text-base leading-5">
        {menus.map((menu) => (
          <button key={menu} type="button" className="whitespace-nowrap">{menu}</button>
        ))}
      </nav>

      <Toolbar tool={tool} setTool={setTool} />

      <div className="relative flex min-h-0 flex-1">
        <Dock tool={tool} setTool={setTool} />
        <main className="relative min-w-0 flex-1 overflow-hidden border-t-2 border-[#7c7c7c] bg-[#cececc]">
          <Scene />
          <div className="absolute right-3.5 bottom-[9px] flex w-[280px] flex-col items-start gap-[26px]">
            <KeyBadge>&lt;LButtonDown&gt;</KeyBadge>
            <KeyBadge>&lt;LButtonUp&gt;</KeyBadge>
          </div>
        </main>
        <Tray />
        <div className="pointer-events-none absolute right-[610px] bottom-0 left-0 h-[73px] bg-black/43" />
      </div>

      <StatusBar />
    </div>
  );
}
